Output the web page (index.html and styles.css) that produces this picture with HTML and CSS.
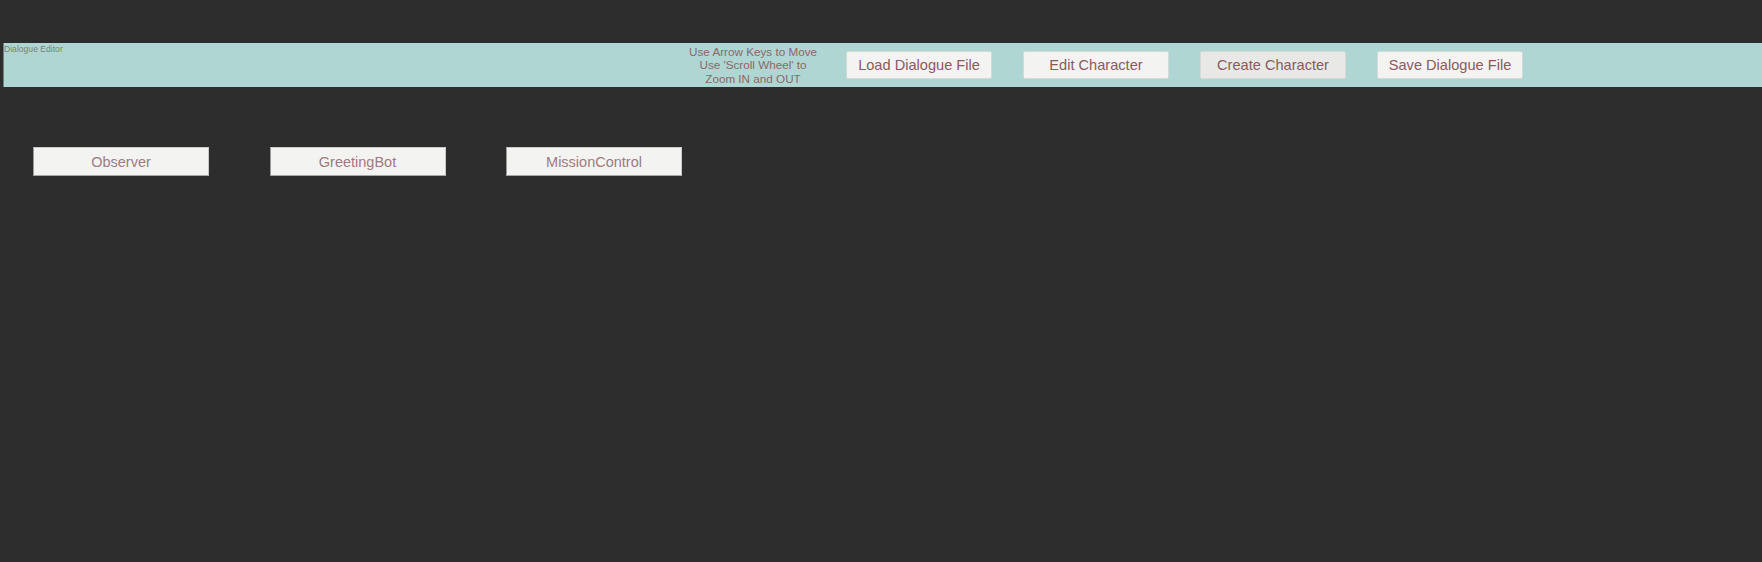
FILE: index.html
```html
<!DOCTYPE html>
<html>
<head>
<meta charset="utf-8">
<title>Dialogue Editor</title>
<link rel="stylesheet" href="styles.css">
</head>
<body>
  <div class="toolbar">
    <div class="title">Dialogue Editor</div>
    <div class="help">Use Arrow Keys to Move<br>Use 'Scroll Wheel' to<br>Zoom IN and OUT</div>
    <div class="actions">
      <button class="tbtn">Load Dialogue File</button>
      <button class="tbtn">Edit Character</button>
      <button class="tbtn hover">Create Character</button>
      <button class="tbtn">Save Dialogue File</button>
    </div>
  </div>
  <div class="characters">
    <button class="cbtn">Observer</button>
    <button class="cbtn">GreetingBot</button>
    <button class="cbtn">MissionControl</button>
  </div>
</body>
</html>
```

FILE: styles.css
```css
html, body {
  margin: 0;
  padding: 0;
  background: #2d2d2d;
  font-family: "Liberation Sans", Arial, sans-serif;
  width: 1762px;
  height: 562px;
  overflow: hidden;
}

body {
  padding-top: 43px;
  box-sizing: border-box;
}

.toolbar {
  margin-left: 3px;
  height: 44px;
  background: #b0d6d3;
  border-left: 1px solid #6f7f7e;
  display: flex;
  align-items: center;
  box-sizing: border-box;
}

.title {
  align-self: flex-start;
  width: 679px;
  flex: 0 0 679px;
  font-size: 8.6px;
  line-height: 10px;
  color: #7b7f7e;
  padding-top: 1px;
}

.help {
  width: 140px;
  flex: 0 0 140px;
  text-align: center;
  font-size: 11.7px;
  line-height: 13.5px;
  color: #8a6868;
}

.actions {
  display: flex;
  gap: 31px;
  margin-left: 23px;
}

.tbtn {
  width: 146px;
  height: 28px;
  padding: 0;
  margin: 0;
  background: #f3f3f1;
  border: 1px solid #d3dad8;
  border-radius: 2px;
  font-family: "Liberation Sans", Arial, sans-serif;
  font-size: 14.6px;
  color: #8b5a60;
  box-sizing: border-box;
}

.tbtn.hover {
  background: #e8e8e6;
}

.characters {
  display: flex;
  gap: 60.5px;
  padding-left: 33px;
  margin-top: 60px;
}

.cbtn {
  width: 176px;
  height: 29px;
  padding: 0;
  margin: 0;
  background: #f3f3f1;
  border: 1px solid #c9c9c7;
  border-left-color: #9a9a9a;
  border-bottom-color: #a5a5a5;
  border-radius: 0;
  font-family: "Liberation Sans", Arial, sans-serif;
  font-size: 14.5px;
  color: #a07a7e;
  box-sizing: border-box;
}
```
